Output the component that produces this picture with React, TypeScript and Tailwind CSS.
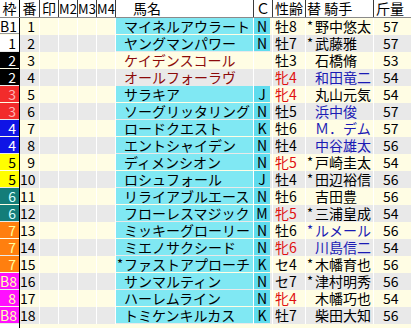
import React from "react";

/* ---------- data ---------- */
type Row = {
  waku: string;
  wakuCls: string;
  no: number;
  mark: string;
  name: string;
  muted?: boolean;
  c: string;
  sex: string;
  mare?: boolean;
  jMark: string;
  jockey: string;
  blue?: boolean;
  kg: number;
};

const W1 = "bg-white text-black";
const W2 = "bg-black text-white";
const W3 = "bg-[#f22b2b] text-[#ffb4b4]";
const W4 = "bg-[#0f14e6] text-white";
const W5 = "bg-[#ffff00] text-black";
const W6 = "bg-[#137d79] text-[#d8ffff]";
const W7 = "bg-[#ff7f0f] text-[#ffff9a]";
const W8 = "bg-[#ff10ff] text-[#ffffb0]";

const rows: Row[] = [
  { waku: "B1", wakuCls: W1, no: 1, mark: "", name: "マイネルアウラート", c: "N", sex: "牡8", jMark: "*", jockey: "野中悠太", kg: 57 },
  { waku: "1", wakuCls: W1, no: 2, mark: "", name: "ヤングマンパワー", c: "N", sex: "牡7", jMark: "*", jockey: "武藤雅", kg: 57 },
  { waku: "2", wakuCls: W2, no: 3, mark: "", name: "ケイデンスコール", muted: true, c: "", sex: "牡3", jMark: "", jockey: "石橋脩", kg: 53 },
  { waku: "2", wakuCls: W2, no: 4, mark: "", name: "オールフォーラヴ", muted: true, c: "", sex: "牝4", mare: true, jMark: "", jockey: "和田竜二", blue: true, kg: 54 },
  { waku: "3", wakuCls: W3, no: 5, mark: "", name: "サラキア", c: "J", sex: "牝4", mare: true, jMark: "", jockey: "丸山元気", kg: 54 },
  { waku: "3", wakuCls: W3, no: 6, mark: "", name: "ソーグリッタリング", c: "N", sex: "牡5", jMark: "", jockey: "浜中俊", blue: true, kg: 57 },
  { waku: "4", wakuCls: W4, no: 7, mark: "", name: "ロードクエスト", c: "K", sex: "牡6", jMark: "", jockey: "Ｍ．デム", blue: true, kg: 57 },
  { waku: "4", wakuCls: W4, no: 8, mark: "", name: "エントシャイデン", c: "N", sex: "牡4", jMark: "", jockey: "中谷雄太", blue: true, kg: 56 },
  { waku: "5", wakuCls: W5, no: 9, mark: "", name: "ディメンシオン", c: "N", sex: "牝5", mare: true, jMark: "*", jockey: "戸崎圭太", kg: 54 },
  { waku: "5", wakuCls: W5, no: 10, mark: "", name: "ロシュフォール", c: "J", sex: "牡4", jMark: "*", jockey: "田辺裕信", kg: 56 },
  { waku: "6", wakuCls: W6, no: 11, mark: "", name: "リライアブルエース", c: "N", sex: "牡6", jMark: "", jockey: "吉田豊", kg: 56 },
  { waku: "6", wakuCls: W6, no: 12, mark: "", name: "フローレスマジック", c: "M", sex: "牝5", mare: true, jMark: "*", jockey: "三浦皇成", kg: 54 },
  { waku: "7", wakuCls: W7, no: 13, mark: "", name: "ミッキーグローリー", c: "N", sex: "牡6", jMark: "*", jockey: "ルメール", blue: true, kg: 56 },
  { waku: "7", wakuCls: W7, no: 14, mark: "", name: "ミエノサクシード", c: "N", sex: "牝6", mare: true, jMark: "", jockey: "川島信二", blue: true, kg: 54 },
  { waku: "7", wakuCls: W7, no: 15, mark: "*", name: "ファストアプローチ", c: "K", sex: "セ4", jMark: "*", jockey: "木幡育也", kg: 56 },
  { waku: "B8", wakuCls: W8, no: 16, mark: "", name: "サンマルティン", c: "N", sex: "セ7", jMark: "*", jockey: "津村明秀", kg: 56 },
  { waku: "8", wakuCls: W8, no: 17, mark: "", name: "ハーレムライン", c: "N", sex: "牝4", mare: true, jMark: "", jockey: "木幡巧也", kg: 54 },
  { waku: "B8", wakuCls: W8, no: 18, mark: "", name: "トミケンキルカス", c: "K", sex: "牡7", jMark: "", jockey: "柴田大知", kg: 56 },
];

/* ---------- header ---------- */
function Head() {
  const cell = "h-full border-r border-[#3c3c3c] shrink-0 overflow-hidden";
  return (
    <div className="flex h-[18px] bg-white border-b border-[#8a8a8a] leading-[17px]">
      <div className={`${cell} w-[20px] border-black text-center`}>枠</div>
      <div className={`${cell} w-[20px] text-center`}>番</div>
      <div className={`${cell} w-[19px] text-center`}>印</div>
      <div className={`${cell} w-[19px] text-center text-[13px]`}>M2</div>
      <div className={`${cell} w-[19px] text-center text-[13px]`}>M3</div>
      <div className={`${cell} w-[19px] text-center text-[13px]`}>M4</div>
      <div className={`${cell} w-[138px] pl-[17px]`}>馬名</div>
      <div className={`${cell} w-[19px] text-center`}>Ｃ</div>
      <div className={`${cell} w-[33px] pl-[2px]`}>性齢</div>
      <div className={`${cell} w-[68px] pl-[1px] whitespace-pre`}>替 騎手</div>
      <div className="h-full w-[37px] pl-[2px]">斤量</div>
    </div>
  );
}

/* asterisk in its own narrow slot, drawn with the CJK face so it reads larger */
function Star({ on }: { on: string }) {
  return (
    <span className="w-[8px] shrink-0 overflow-visible text-center font-['Noto_Sans_CJK_JP'] text-[13px]">
      {on}
    </span>
  );
}

/* ---------- body row ---------- */
function BodyRow({ r, i }: { r: Row; i: number }) {
  const bg = i % 2 === 0 ? "bg-[#fffde4]" : "bg-[#e9e9e9]";
  const sep = "h-full shrink-0 border-r border-white";
  return (
    <div className={`flex h-[17px] leading-[16px] ${bg}`}>
      <div className="h-full w-[20px] shrink-0 border-r border-black">
        <div className={`h-[16px] pr-[3px] text-right ${r.wakuCls} ${r.waku === "B1" ? "border-b border-[#9a9a9a]" : ""}`}>
          {r.waku}
        </div>
      </div>
      <div className={`${sep} w-[20px] pr-[4px] text-right`}>{r.no}</div>
      <div className={`${sep} w-[19px]`} />
      <div className={`${sep} w-[19px]`} />
      <div className={`${sep} w-[19px]`} />
      <div className={`${sep} w-[19px]`} />
      <div className={`${sep} w-[138px]`}>
        <div
          className={`flex h-[16px] ${r.muted ? "text-[#8c0a0a]" : "bg-[#80e8f3] text-black"}`}
        >
          <Star on={r.mark} />
          <span className="whitespace-nowrap">{r.name}</span>
        </div>
      </div>
      <div className={`${sep} w-[19px]`}>
        {r.c && (
          <div className="h-[16px] w-[16px] bg-[#5fdcee] text-center">{r.c}</div>
        )}
      </div>
      <div className={`${sep} w-[33px] pl-[2px] ${r.mare ? "text-[#e01010]" : "text-black"}`}>
        {r.sex}
      </div>
      <div className={`${sep} flex w-[68px] ${r.blue ? "text-[#1a1ab4]" : "text-black"}`}>
        <Star on={r.jMark} />
        <span className="whitespace-nowrap pl-[1px]">{r.jockey}</span>
      </div>
      <div className="h-full w-[37px] shrink-0 pl-[9px]">{r.kg}</div>
    </div>
  );
}

export default function App() {
  return (
    <div
      className="w-[411px] h-[328px] overflow-hidden bg-[#fffde4] text-[14px] text-black"
      style={{ fontFamily: '"Liberation Sans Narrow", "Noto Sans CJK JP", sans-serif' }}
    >
      <Head />
      {rows.map((r, i) => (
        <BodyRow key={r.no} r={r} i={i} />
      ))}
      <div className="flex h-[17px]">
        <div className="h-full w-[20px] border-r border-black bg-white" />
      </div>
    </div>
  );
}
